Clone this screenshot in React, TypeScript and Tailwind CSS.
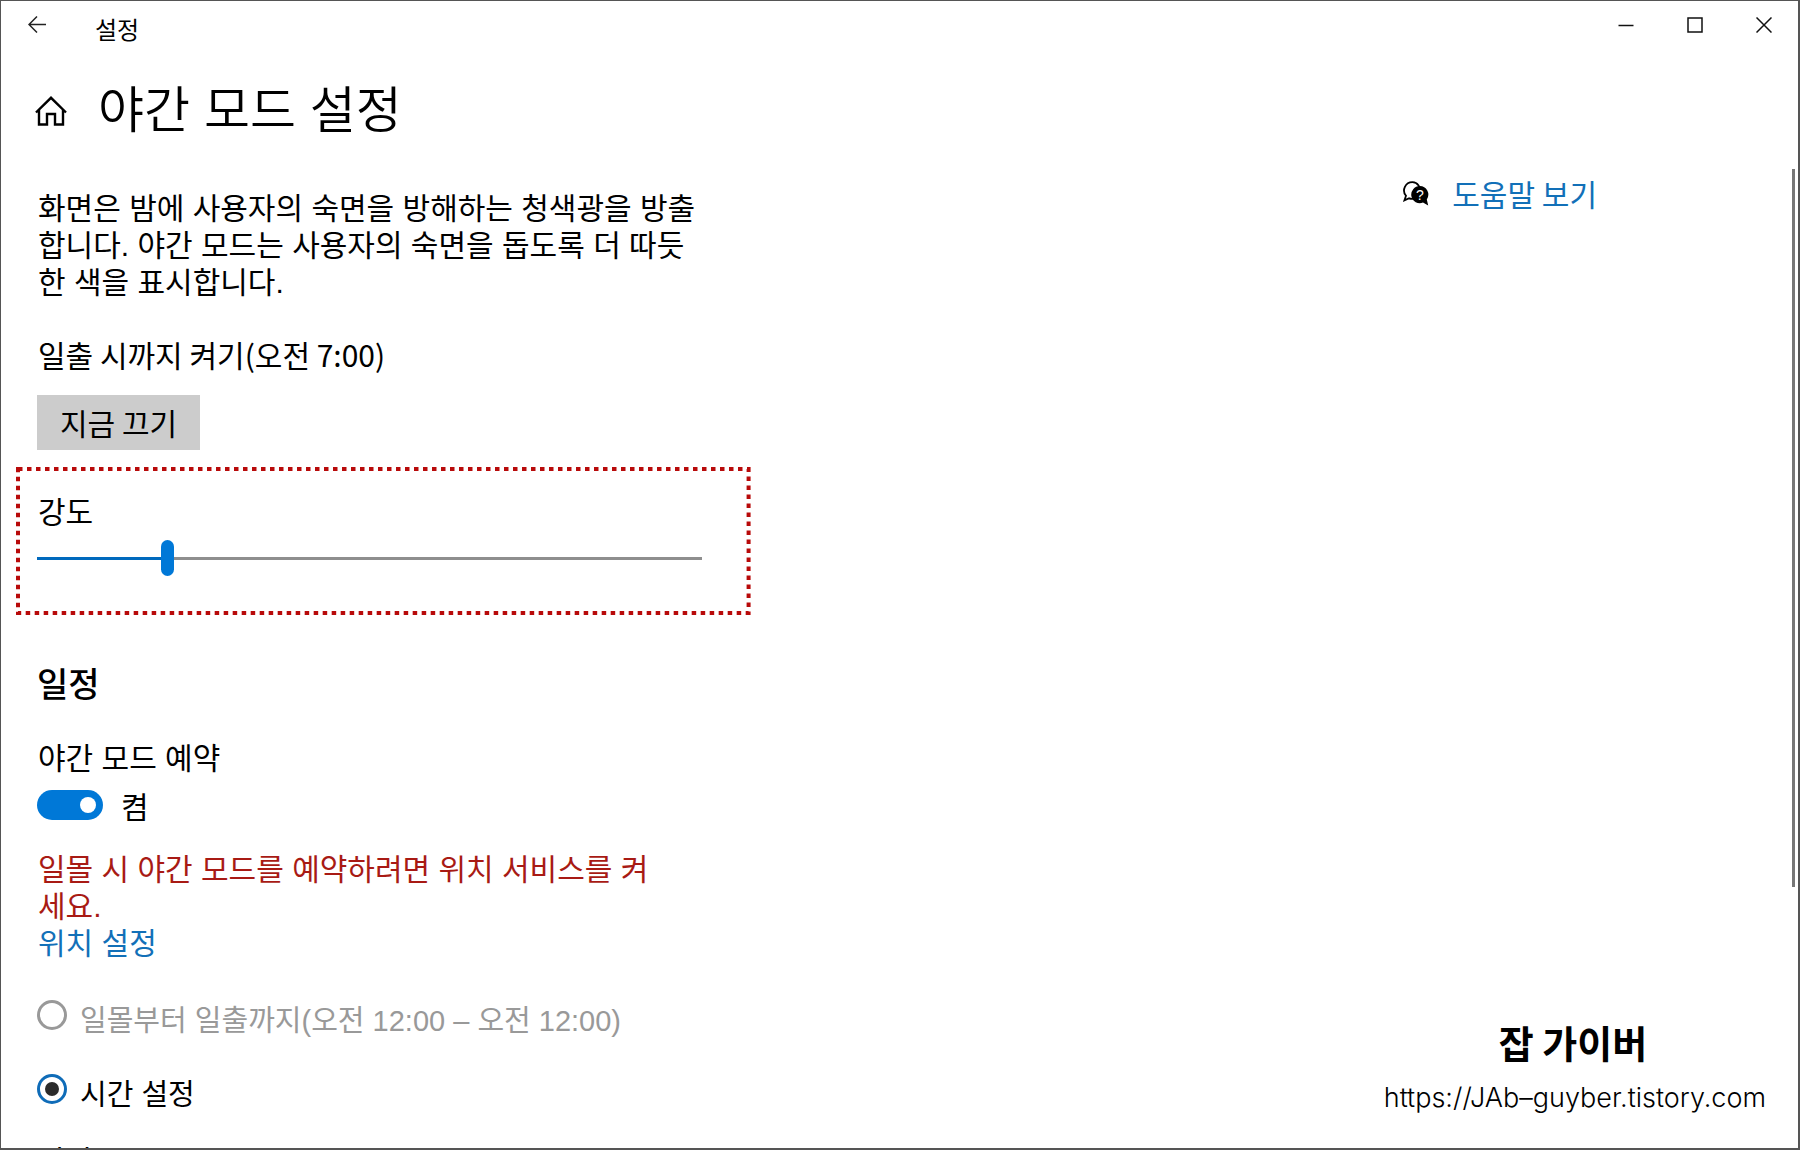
import { FC, ReactNode, useState } from 'react';

const BackIcon: FC = () => (
    <svg width="18" height="17" viewBox="0 0 18 17" fill="none" stroke="#222" strokeWidth="1.5">
        <path d="M18 8.5H1M9 0.5L1 8.5L9 16.5" />
    </svg>
);

const HomeIcon: FC = () => (
    <svg width="32" height="30" viewBox="0 0 32 30" fill="none" stroke="#000" strokeWidth="2.4">
        <path d="M1 16.5L16 1.8L31 16.5" />
        <path d="M4 14V28.5H12V18H20V28.5H28V14" />
    </svg>
);

const HelpIcon: FC = () => (
    <svg width="26" height="25" viewBox="0 0 26 25">
        <path
            d="M9.5 1.2A8.3 8.3 0 0 0 3 14.8L1.4 19.4L6.2 17.3A8.3 8.3 0 1 0 9.5 1.2Z"
            fill="#fff"
            stroke="#000"
            strokeWidth="1.8"
        />
        <path d="M16.8 5A8.6 8.6 0 1 0 20 21.6L25.2 24.4L23.8 18.4A8.6 8.6 0 0 0 16.8 5Z" fill="#000" />
        <text x="17" y="18.5" fontSize="14" fontWeight="400" textAnchor="middle" fill="#fff" fontFamily="Liberation Sans">
            ?
        </text>
    </svg>
);

const WindowButton: FC<{ label: string; children: ReactNode }> = ({ label, children }) => (
    <button aria-label={label} className="flex h-12 w-[69px] items-center justify-center">
        <svg width="16" height="16" viewBox="0 0 16 16" fill="none" stroke="#111" strokeWidth="1.5">
            {children}
        </svg>
    </button>
);

const TitleBar: FC = () => (
    <div className="flex h-12 items-start justify-between">
        <div className="flex items-start">
            <button aria-label="뒤로" className="flex h-[47px] w-[72px] items-center justify-center">
                <BackIcon />
            </button>
            <span className="ml-[22px] pt-3 text-2xl leading-8">설정</span>
        </div>
        <div className="flex">
            <WindowButton label="최소화">
                <path d="M0.5 8.5H15.5" />
            </WindowButton>
            <WindowButton label="최대화">
                <path d="M1 1H15V15H1Z" />
            </WindowButton>
            <WindowButton label="닫기">
                <path d="M0.5 0.5L15.5 15.5M15.5 0.5L0.5 15.5" />
            </WindowButton>
        </div>
    </div>
);

const Intensity: FC = () => {
    const [value, setValue] = useState(19);

    return (
        <div className="relative mt-[42px]">
            <label htmlFor="intensity" className="block pl-px">
                강도
            </label>
            <input
                id="intensity"
                type="range"
                value={value}
                onChange={(e) => setValue(Number(e.target.value))}
                style={{ backgroundImage: `linear-gradient(to right, #0069bd ${value}%, #8e8e8e ${value}%)` }}
                className="mt-[11px] block h-9 w-full appearance-none bg-[length:100%_3px] bg-center bg-no-repeat [&::-webkit-slider-thumb]:h-9 [&::-webkit-slider-thumb]:w-[13px] [&::-webkit-slider-thumb]:appearance-none [&::-webkit-slider-thumb]:rounded-full [&::-webkit-slider-thumb]:bg-[#0078d7]"
            />
            <svg className="pointer-events-none absolute -top-[25px] -left-[21px] h-[148px] w-[calc(100%+70px)] overflow-visible">
                <rect x="2" y="2" width="99.4%" height="144" fill="none" stroke="#b80a0a" strokeWidth="4" strokeDasharray="4.5 4.5" />
            </svg>
        </div>
    );
};

const RadioRow: FC<{ label: string; checked?: boolean; disabled?: boolean; className?: string }> = ({
    label,
    checked,
    disabled,
    className,
}) => (
    <label className={`flex h-[37px] items-start gap-[13px] ${disabled ? 'text-[#999]' : ''} ${className ?? ''}`}>
        <input
            type="radio"
            name="schedule"
            defaultChecked={checked}
            disabled={disabled}
            className="flex size-[30px] shrink-0 appearance-none items-center justify-center rounded-full border-[3px] border-[#999] checked:border-[#0f6cb8] checked:before:size-[14px] checked:before:rounded-full checked:before:bg-[#2b2b2b]"
        />
        <span className="pt-[3px] font-['Liberation_Sans','Noto_Sans_CJK_KR',sans-serif] text-[29px]">{label}</span>
    </label>
);

const Schedule: FC = () => (
    <section>
        <h2 className="mt-[83px] text-[34px] leading-[48px] font-medium">일정</h2>
        <p id="night-schedule" className="mt-[33px] pl-px font-['Liberation_Sans','Noto_Sans_CJK_KR',sans-serif]">
            야간 모드 예약
        </p>
        <label className="mt-[13px] flex h-[30px] items-center gap-[18px]">
            <input
                type="checkbox"
                role="switch"
                defaultChecked
                aria-describedby="night-schedule"
                className="flex h-[30px] w-[66px] appearance-none items-center rounded-full bg-[#0078d7] px-[7px] before:size-4 before:rounded-full before:bg-white checked:justify-end"
            />
            켬
        </label>
        <p className="mt-[31px] pl-px font-['Liberation_Sans','Noto_Sans_CJK_KR',sans-serif] text-[#a81a14]">
            일몰 시 야간 모드를 예약하려면 위치 서비스를 켜
            <br />
            세요.
            <br />
            <a href="#location" className="text-[#1270b8]">
                위치 설정
            </a>
        </p>
        <RadioRow className="mt-[38px]" label="일몰부터 일출까지(오전 12:00 – 오전 12:00)" disabled />
        <RadioRow className="mt-[37px]" label="시간 설정" checked />
        <p className="mt-[30px]">켜기</p>
    </section>
);

export default function App() {
    return (
        <div className="relative flex h-screen flex-col overflow-hidden border border-[#555] border-r-2 border-b-2 bg-white font-['Noto_Sans_CJK_KR',sans-serif] text-[30px] leading-[37px] text-black">
            <TitleBar />
            <header className="mt-6 flex h-16 shrink-0 items-start gap-[31px] pl-[34px]">
                <div className="pt-[23px]">
                    <HomeIcon />
                </div>
                <h1 className="pt-[6px] font-['Liberation_Sans','Noto_Sans_CJK_KR',sans-serif] text-[50px] leading-[64px] font-[350]">
                    야간 모드 설정
                </h1>
            </header>
            <div className="mt-8 flex min-h-0 flex-1 items-start justify-between">
                <main className="mt-[21px] ml-9 w-[665px] shrink-0 whitespace-nowrap">
                    <p className="pl-px font-['Liberation_Sans','Noto_Sans_CJK_KR',sans-serif]">
                        화면은 밤에 사용자의 숙면을 방해하는 청색광을 방출
                        <br />
                        합니다. 야간 모드는 사용자의 숙면을 돕도록 더 따듯
                        <br />한 색을 표시합니다.
                    </p>
                    <p className="mt-[35px] pl-px">일출 시까지 켜기(오전 7:00)</p>
                    <button className="mt-[22px] flex h-[55px] items-center bg-[#ccc] px-[23px]">지금 끄기</button>
                    <Intensity />
                    <Schedule />
                </main>
                <aside className="flex">
                    <a href="#help" className="mt-[6px] mr-[195px] flex items-center gap-[23px] self-start text-[#1270b8]">
                        <HelpIcon />
                        도움말 보기
                    </a>
                    <div className="mr-[3px] h-[718px] w-[3px] bg-[#777]" />
                </aside>
            </div>
            <footer className="absolute right-8 bottom-8 flex flex-col items-center gap-3">
                <strong className="pr-1 text-[38px] leading-[52px] font-bold">잡 가이버</strong>
                <a href="#blog" className="font-['Inter',sans-serif] text-[27px] leading-9 font-light">
                    https://JAb–guyber.tistory.com
                </a>
            </footer>
        </div>
    );
}
